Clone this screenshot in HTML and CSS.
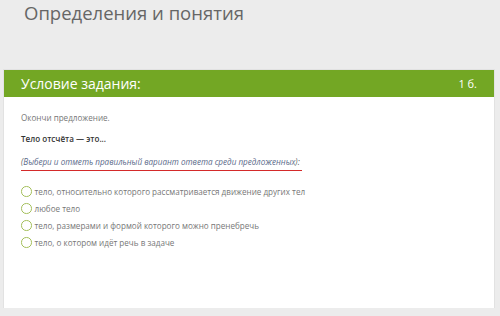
FILE: index.html
```html
<!DOCTYPE html>
<html lang="ru">
<head>
<meta charset="utf-8">
<link rel="stylesheet" href="styles.css">
</head>
<body>
<h1 class="page-title">Определения и понятия</h1>
<section class="panel">
  <div class="panel-head">
    <span class="panel-title">Условие задания:</span>
    <span class="panel-score">1 б.</span>
  </div>
  <div class="panel-body">
    <p class="lead">Окончи предложение.</p>
    <p class="question">Тело отсчёта — это...</p>
    <p class="hint">(<span class="hint-text">Выбери и отметь правильный вариант ответа среди предложенных</span>):</p>
    <ul class="options">
      <li class="option"><span class="radio"></span>тело, относительно которого рассматривается движение других тел</li>
      <li class="option"><span class="radio"></span>любое тело</li>
      <li class="option"><span class="radio"></span>тело, размерами и формой которого можно пренебречь</li>
      <li class="option"><span class="radio"></span>тело, о котором идёт речь в задаче</li>
    </ul>
  </div>
</section>
</body>
</html>
```
FILE: styles.css
```css
html, body {
  margin: 0;
  padding: 0;
  background: #ececec;
  font-family: "Open Sans", "Noto Sans", sans-serif;
}
.page-title {
  margin: 0;
  padding: 0 0 0 24px;
  font-size: 18.5px;
  line-height: 26px;
  font-weight: 400;
  color: #666;
}
.panel {
  margin: 44px 6px 0 4px;
  background: #fff;
  box-shadow: 0 0 0 1px #e2e2e2;
  height: 238px;
}
.panel-head {
  height: 27px;
  background: #73a724;
  color: #fff;
  display: flex;
  align-items: center;
  justify-content: space-between;
  padding: 0 17px 0 17px;
}
.panel-title {
  font-size: 14px;
}
.panel-score {
  font-size: 11px;
}
.panel-body {
  padding: 14px 17px 0 17px;
}
.lead {
  margin: 0;
  font-size: 8.1px;
  line-height: 14px;
  color: #777;
}
.question {
  margin: 7px 0 0;
  font-size: 8.1px;
  line-height: 14px;
  color: #333;
  font-weight: 600;
}
.hint {
  margin: 9px 0 0;
  font-size: 8.1px;
  line-height: 14px;
  color: #666;
  font-style: italic;
  display: inline-block;
  border-bottom: 1.5px solid #d42a2a;
  padding: 0 2px 1px 0;
}
.hint-text {
  color: #5a6a8a;
}
.options {
  list-style: none;
  margin: 12px 0 0;
  padding: 0;
}
.option {
  display: flex;
  align-items: center;
  height: 17px;
  font-size: 8.1px;
  color: #777;
}
.radio {
  width: 8.5px;
  height: 8.5px;
  border: 1.3px solid #a4bf5a;
  border-radius: 50%;
  margin-right: 3px;
  flex: none;
}
```
